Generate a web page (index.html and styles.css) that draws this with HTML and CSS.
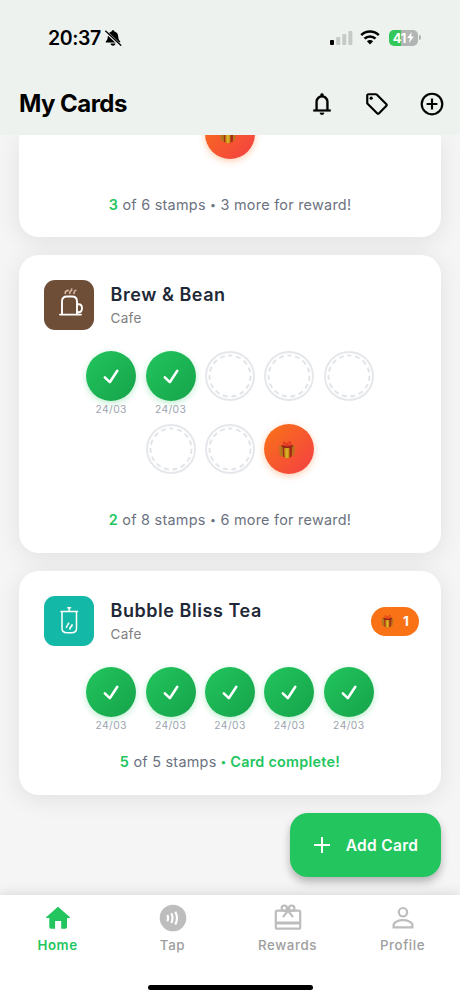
FILE: index.html
```html
<!DOCTYPE html>
<html lang="en">
<head>
<meta charset="utf-8">
<meta name="viewport" content="width=device-width, initial-scale=1">
<title>My Cards</title>
<link rel="stylesheet" href="styles.css">
</head>
<body>
<svg class="defs" width="0" height="0" aria-hidden="true">
  <symbol id="check" viewBox="0 0 50 50"><path d="M18.800 26.300 23.800 31.200 31.300 19.700" fill="none" stroke="#fff" stroke-width="2.500" stroke-linecap="round" stroke-linejoin="round"/></symbol>
  <symbol id="ring" viewBox="0 0 50 50"><circle cx="25" cy="25" r="24" fill="none" stroke="#e5e7eb" stroke-width="1.900"/><circle cx="25" cy="25" r="20.500" fill="none" stroke="#e1e4e8" stroke-width="1.900" stroke-dasharray="5 3.587" stroke-dashoffset="2.500" transform="rotate(-90 25 25)"/></symbol>
  <symbol id="gift" viewBox="0 0 20 20"><path d="M2 5.500 6 6.500v10.200l-3.200-1.500zM18 5.500l-3.500 1v9.700l2.500-1.500z" fill="#b5781b"/><path d="M5.500 6.500h9.800l-.6 10.200-4.700 1.600-4-1.600z" fill="#a62a19"/><path d="M7.300 8h5v9.600l-2.500.8-2.300-.8z" fill="#c99b17"/><path d="M9.200 8h1.500v10H9.200z" fill="#e0b52c"/><path d="M4.500 5.500 10 7.500l6-2" fill="none" stroke="#8f2518" stroke-width="1.500"/><path d="M10 6C6 5 5.800 1.600 7.500 2.200 9 2.700 10 5 10 6c.5-3 2.200-4.900 3.500-3.800 1.100 1-1 3-3.500 3.800" fill="none" stroke="#df3520" stroke-width="1.200"/></symbol>
</svg>
<div class="phone">
  <div class="top">
    <div class="status">
      <span class="time">20:37</span>
      <svg class="mute" width="18" height="18" viewBox="0 0 18 18"><path d="M9 1.200c.8 0 1.300.5 1.400 1.200 2.500.7 3.700 2.500 3.800 5 .1 2.700.9 3.800 2 5v1H1.800v-1c1.200-1.200 1.900-2.300 2-5 .1-2.500 1.300-4.300 3.800-5 .1-.7.600-1.200 1.400-1.200zM6.500 14.500h5c-.2 1.400-1.200 2.200-2.500 2.200s-2.300-.800-2.500-2.200z"/><path d="M1.300 2.300 16.200 16.300" stroke="#eef3f0" stroke-width="2.900"/><path d="M1.600 2.100 16.800 16.200" stroke="#000" stroke-width="1.300" stroke-linecap="round"/></svg>
      <svg class="signal" width="23" height="16" viewBox="0 0 23 16"><rect x="0" y="10" width="4" height="5" rx="1"/><g fill="#c5cac7"><rect x="6.200" y="7" width="4" height="8" rx="1"/><rect x="12.300" y="4" width="4" height="11" rx="1"/><rect x="18.400" y="1" width="4" height="14" rx="1"/></g></svg>
      <svg class="wifi" width="20" height="15" viewBox="0 0 20 15"><g fill="none" stroke="#000" stroke-width="2.600"><path d="M1.200 5.100a12.500 12.500 0 0 1 17.600 0"/><path d="M4.500 8.700a7.800 7.800 0 0 1 11 0"/></g><path d="M6.900 11.300a4.400 4.400 0 0 1 6.200 0L10 14.500z"/></svg>
      <div class="battery"><span>41</span><svg width="7" height="11" viewBox="0 0 7 11"><path d="M4.800 0 .2 6h2.700L1.900 11 6.900 4.600H4.100z" fill="#fff"/></svg></div>
    </div>
    <header class="header">
      <h1>My Cards</h1>
      <div class="actions">
        <svg width="26" height="26" viewBox="0 0 24 24"><path fill="#000" stroke="#000" stroke-width=".2" d="M4 19v-2h2v-7q0-2.080 1.250-3.690T10.500 4.200v-.700q0-.630.440-1.060T12 2t1.060.440.440 1.060v.700q2 .500 3.250 2.110T18 10v7h2v2zm8 3q-.830 0-1.410-.590T10 20h4q0 .830-.590 1.410T12 22m-4-5h8v-7q0-1.650-1.180-2.830T12 6 9.180 7.170 8 10z"/></svg>
        <svg width="26" height="26" viewBox="0 0 24 24"><path fill="#000" d="m21.400 11.600-9-9C12 2.200 11.500 2 11 2H4c-1.100 0-2 .900-2 2v7c0 .600.200 1.100.600 1.400l9 9c.400.400.900.600 1.400.600s1-.200 1.400-.600l7-7c.400-.400.600-.900.600-1.400s-.200-1-.600-1.400M13 20l-9-9V4h7l9 9z"/><circle cx="6.600" cy="6.600" r="1.500"/></svg>
        <svg width="26" height="26" viewBox="0 0 24 24" fill="none" stroke="#000" stroke-width="2"><circle cx="12" cy="12" r="9.500"/><path d="M12 7v10M7 12h10"/></svg>
      </div>
    </header>
  </div>

  <main class="cards">
    <section class="card card-cut">
      <div class="stamp reward"><svg class="gift"><use href="#gift"/></svg></div>
      <p class="summary"><b>3</b> of 6 stamps <i>•</i> 3 more for reward!</p>
    </section>

    <section class="card">
      <div class="shop">
        <div class="logo brown"><svg width="50" height="50" viewBox="0 0 50 50" fill="none" stroke="#fff" stroke-width="1.900" stroke-linecap="round" stroke-linejoin="round"><path d="M16 34.600h21M18 34V21.500q0-5 5-5h5q5 0 5 5v12.500M33.200 24.200h1.300q3.500 0 3.500 4T34.500 32.200h-1.300"/><path stroke="#d3b6a2" stroke-width="1.700" d="M21.200 13.300q-.1-2.500 2.900-2.900M25.700 13.300q-.2-1.700 1-2.300 1.100-.600 1-2M30 13.300q0-2.200 1.700-3"/></svg></div>
        <div class="info"><h2>Brew &amp; Bean</h2><p>Cafe</p></div>
      </div>
      <div class="stamps">
        <div class="cell"><div class="stamp done"><svg><use href="#check"/></svg></div><span>24/03</span></div>
        <div class="cell"><div class="stamp done"><svg><use href="#check"/></svg></div><span>24/03</span></div>
        <div class="cell"><div class="stamp"><svg><use href="#ring"/></svg></div></div>
        <div class="cell"><div class="stamp"><svg><use href="#ring"/></svg></div></div>
        <div class="cell"><div class="stamp"><svg><use href="#ring"/></svg></div></div>
        <div class="cell"><div class="stamp"><svg><use href="#ring"/></svg></div></div>
        <div class="cell"><div class="stamp"><svg><use href="#ring"/></svg></div></div>
        <div class="cell"><div class="stamp reward"><svg class="gift"><use href="#gift"/></svg></div></div>
      </div>
      <p class="summary"><b>2</b> of 8 stamps <i>•</i> 6 more for reward!</p>
    </section>

    <section class="card">
      <div class="shop">
        <div class="logo teal"><svg width="50" height="50" viewBox="0 0 50 50" fill="none" stroke="#fff" stroke-width="1.500" stroke-linecap="round" stroke-linejoin="round"><path d="M17 15.500h16.500M25.200 15.500v-4M23.800 11.800h2.800M18 16v16.500q0 4.200 5 4.200h4.500q5 0 5-4.200V16"/><path d="m22.500 31.200.500-1.200M24 28.500l.500-1.200M25.800 32.800l.8-1.600M27.300 30.500l.8-1.500" stroke-width="1.700"/></svg></div>
        <div class="info"><h2>Bubble Bliss Tea</h2><p>Cafe</p></div>
        <div class="badge"><svg><use href="#gift"/></svg><span>1</span></div>
      </div>
      <div class="stamps">
        <div class="cell"><div class="stamp done"><svg><use href="#check"/></svg></div><span>24/03</span></div>
        <div class="cell"><div class="stamp done"><svg><use href="#check"/></svg></div><span>24/03</span></div>
        <div class="cell"><div class="stamp done"><svg><use href="#check"/></svg></div><span>24/03</span></div>
        <div class="cell"><div class="stamp done"><svg><use href="#check"/></svg></div><span>24/03</span></div>
        <div class="cell"><div class="stamp done"><svg><use href="#check"/></svg></div><span>24/03</span></div>
      </div>
      <p class="summary"><b>5</b> of 5 stamps <strong><i>•</i> Card complete!</strong></p>
    </section>

    <button class="add"><svg width="18" height="18" viewBox="0 0 18 18"><path d="M9 1v16M1 9h16" stroke="#fff" stroke-width="2"/></svg><span>Add Card</span></button>
  </main>

  <nav class="nav">
    <div class="tabs">
      <div class="tab active"><svg width="30" height="30" viewBox="0 0 30 30"><path fill="currentColor" d="M15 3.800 27 14.200q.4.900-.6.900H24V24q0 1.800-1.800 1.800h-4V18h-6.100v7.800h-4q-1.800 0-1.800-1.800v-8.900H3.700q-1.200-.1-.6-.9z"/></svg><span>Home</span></div>
      <div class="tab"><svg width="30" height="30" viewBox="0 0 30 30"><circle cx="15" cy="15" r="13.300" fill="#bdbdbd"/><path d="M9.300 12q1.600 3 0 6.200M13.300 10.300q2.500 4.700 0 9.600M17.300 8.700q3.400 6.300 0 12.800" fill="none" stroke="#fff" stroke-width="2.100"/></svg><span>Tap</span></div>
      <div class="tab"><svg width="30" height="30" viewBox="0 0 30 30" fill="none" stroke="#bdbdbd" stroke-width="2.200"><rect x="2.800" y="7.700" width="24.400" height="18" rx="1.500"/><path d="M3 20h24" stroke-width="3"/><circle cx="11.300" cy="5.200" r="2.700"/><circle cx="18.700" cy="5.200" r="2.700"/><path d="m10 14.200 5-6.700 5 6.700"/></svg><span>Rewards</span></div>
      <div class="tab"><svg width="30" height="30" viewBox="0 0 30 30" fill="none" stroke="#bdbdbd" stroke-width="2.200"><circle cx="15" cy="9.200" r="4.200"/><path d="M5.600 24.300v-2.300c0-3.200 5.200-4.800 9.400-4.800s9.400 1.600 9.400 4.800v2.300z"/></svg><span>Profile</span></div>
    </div>
    <div class="indicator"></div>
  </nav>
</div>
</body>
</html>
```
FILE: styles.css
```css
* { box-sizing: border-box; margin: 0; padding: 0; }
body { font-family: Inter, "Liberation Sans", sans-serif; color: #1f2937; background: #f5f5f5; }
.defs { position: absolute; }
.phone { width: 460px; height: 1000px; display: flex; flex-direction: column; overflow: hidden; background: #f4f5f4; }

.top { flex: none; height: 135px; background: #edf2ef; z-index: 2; color: #000; }
.status { display: flex; align-items: center; height: 75px; padding: 0 42px 0 48px; }
.time { font-size: 19.500px; font-weight: 600; width: 56px; letter-spacing: -.4px; white-space: nowrap; }
.mute { margin-right: auto; }
.signal { margin-right: 7px; }
.wifi { margin-right: 9px; }
.battery { position: relative; width: 29px; height: 16px; border-radius: 5px; background: linear-gradient(90deg, #34c759 41%, #b1b5b3 41%); display: flex; align-items: center; justify-content: center; gap: 1px; color: #fff; font-size: 13px; font-weight: 700; letter-spacing: -.3px; }
.battery::after { content: ""; position: absolute; right: -3px; top: 5.500px; width: 2px; height: 5px; border-radius: 0 2px 2px 0; background: #b1b5b3; }
.header { height: 57px; padding: 0 15px 0 19px; display: flex; align-items: center; justify-content: space-between; }
.header h1 { font-size: 24px; line-height: 30px; font-weight: 700; letter-spacing: -.55px; }
.actions { display: flex; gap: 29px; }
.actions svg { display: block; }

.cards { flex: none; height: 760px; padding: 0 19px; display: flex; flex-direction: column; }
.card { flex: none; width: 422px; padding: 25px 22px 21px 25px; margin-bottom: 18.400px; border-radius: 20px; background: #fff; box-shadow: 0 4px 25px rgba(0, 0, 0, .085); }
.card-cut { height: 102px; padding-top: 0; border-radius: 0 0 20px 20px; }
.card-cut .stamp { margin: -26px auto 0 161px; }
.card-cut .summary { margin-top: 35px; }
.shop { display: flex; height: 50px; align-items: center; }
.logo { width: 50px; height: 50px; border-radius: 11px; margin-right: 16.500px; }
.logo svg { display: block; }
.brown { background: #6f4e37; }
.teal { background: #14b8a6; }
.info { flex: 1; }
.info h2 { font-size: 18px; line-height: 26px; font-weight: 600; letter-spacing: .55px; }
.info p { color: #808080; font-size: 13.500px; line-height: 20px; letter-spacing: .3px; }
.badge { width: 48px; height: 29px; border-radius: 15px; background: #f97316; display: flex; align-items: center; gap: 8px; padding-left: 9px; color: #fff; font-size: 13.500px; font-weight: 700; }
.badge svg { width: 15px; height: 15px; }

.stamps { width: 298px; margin: 20.500px 0 0 37px; display: flex; flex-wrap: wrap; justify-content: center; gap: 7.500px 9.400px; }
.cell { width: 50px; height: 66px; }
.cell > span { display: block; width: 60px; margin: 1px 0 0 -5px; text-align: center; font-size: 10.300px; line-height: 15px; letter-spacing: .4px; color: #9ca3af; }
.stamp { width: 50px; height: 50px; border-radius: 50%; }
.stamp svg { display: block; width: 50px; height: 50px; }
.done { background: linear-gradient(135deg, #22c55e, #16a34a); box-shadow: 0 2px 6px rgba(34, 197, 94, .3); }
.reward { background: linear-gradient(135deg, #f97316, #f43f45); box-shadow: 0 2px 7px rgba(249, 115, 22, .35); display: flex; align-items: center; justify-content: center; }
.reward .gift { width: 20px; height: 20px; margin: 2px 4px 0 0; }
.summary { margin: 18.300px 3px 0 0; text-align: center; font-size: 14.400px; line-height: 22px; letter-spacing: .26px; color: #6b7280; white-space: nowrap; }
.summary i { font-style: normal; font-size: 10.500px; vertical-align: 1px; }
.summary b, .summary strong { color: #22c55e; font-weight: 600; }

.add { flex: none; width: 151px; height: 64px; margin-left: auto; border: 0; border-radius: 18px; background: #22c55e; color: #fff; display: flex; align-items: center; justify-content: center; gap: 15px; font: 600 15.500px Inter, sans-serif; letter-spacing: .3px; box-shadow: 0 5px 9px rgba(0, 0, 0, .27); white-space: nowrap; }

.nav { flex: none; height: 105px; z-index: 2; background: #fff; box-shadow: 0 -1px 12px rgba(0, 0, 0, .13); }
.tabs { display: flex; height: 90px; padding-top: 8px; }
.tab { width: 115px; display: flex; flex-direction: column; align-items: center; color: #9e9e9e; font-size: 13.300px; font-weight: 500; letter-spacing: .6px; line-height: 18px; }
.tab svg { margin-bottom: 3px; }
.active { color: #22c55e; font-weight: 600; }
.indicator { width: 165px; height: 5px; margin: 0 auto; border-radius: 3px; background: #000; }
```
